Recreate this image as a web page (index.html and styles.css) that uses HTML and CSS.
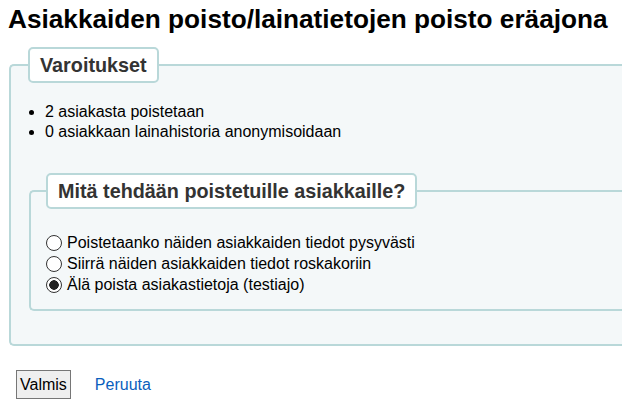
FILE: index.html
```html
<!DOCTYPE html>
<html lang="fi">
<head>
<meta charset="utf-8">
<title>Asiakkaiden poisto</title>
<link rel="stylesheet" href="styles.css">
</head>
<body>
<h1 class="title">Asiakkaiden poisto/lainatietojen poisto eräajona</h1>
<div class="page">
  <fieldset class="rows outer">
    <legend class="box-legend">Varoitukset</legend>
    <ul class="warnings">
      <li>2 asiakasta poistetaan</li>
      <li>0 asiakkaan lainahistoria anonymisoidaan</li>
    </ul>
    <fieldset class="rows inner">
      <legend class="box-legend">Mitä tehdään poistetuille asiakkaille?</legend>
      <div class="options">
        <label class="option"><input class="radio" type="radio" name="op"> Poistetaanko näiden asiakkaiden tiedot pysyvästi</label>
        <label class="option"><input class="radio" type="radio" name="op"> Siirrä näiden asiakkaiden tiedot roskakoriin</label>
        <label class="option"><input class="radio" type="radio" name="op" checked> Älä poista asiakastietoja (testiajo)</label>
      </div>
    </fieldset>
  </fieldset>
  <div class="actions">
    <button class="btn" type="button">Valmis</button>
    <a class="cancel" href="#">Peruuta</a>
  </div>
</div>
</body>
</html>
```
FILE: styles.css
```css
html {
  overflow: hidden;
}
body {
  margin: 8px 0 8px 8px;
  font-family: "Liberation Sans", Arial, sans-serif;
  font-size: 16px;
  color: #000;
  background: #fff;
}
.title {
  margin: 0;
  font-size: 26.2px;
  font-weight: bold;
  line-height: 22px;
  white-space: nowrap;
}
.rows {
  border: 2px solid #b9d8d9;
  border-right: none;
  border-radius: 5px 0 0 5px;
  background: #f4f8f9;
  margin: 0;
}
.outer {
  margin: 17px 0 0 1px;
  padding: 19px 0 33px 18px;
}
.box-legend {
  background: #fff;
  border: 2px solid #b9d8d9;
  border-radius: 5px;
  font-weight: bold;
  font-size: 19.8px;
  color: #333;
  padding: 5px 10px;
  margin-left: -1px;
  line-height: 22px;
}
.warnings {
  margin: 0;
  padding-left: 16px;
  line-height: 20px;
}
.warnings li {
  list-style: disc;
}
.inner {
  margin: 31px 0 0 0;
  padding: 23px 0 14px 16px;
}
.options {
  display: flex;
  flex-direction: column;
}
.option {
  display: flex;
  align-items: center;
  gap: 5px;
  line-height: 21px;
  color: #000;
}
.radio {
  appearance: none;
  -webkit-appearance: none;
  width: 16px;
  height: 16px;
  margin: 0 0 0 -1px;
  border: 1px solid #333;
  border-radius: 50%;
  background: #fff;
  box-sizing: border-box;
}
.radio:checked {
  background: radial-gradient(circle, #222 0 4.5px, #fff 5px);
}
.actions {
  display: flex;
  align-items: center;
  gap: 24px;
  margin: 24px 0 0 8px;
}
.btn {
  font-family: "Liberation Sans", Arial, sans-serif;
  font-size: 16px;
  height: 29px;
  padding: 0 3px;
  border: 1px solid #767676;
  background: #efefef;
  color: #000;
}
.cancel {
  color: #0a5ebd;
  text-decoration: none;
  font-size: 16px;
}
```
